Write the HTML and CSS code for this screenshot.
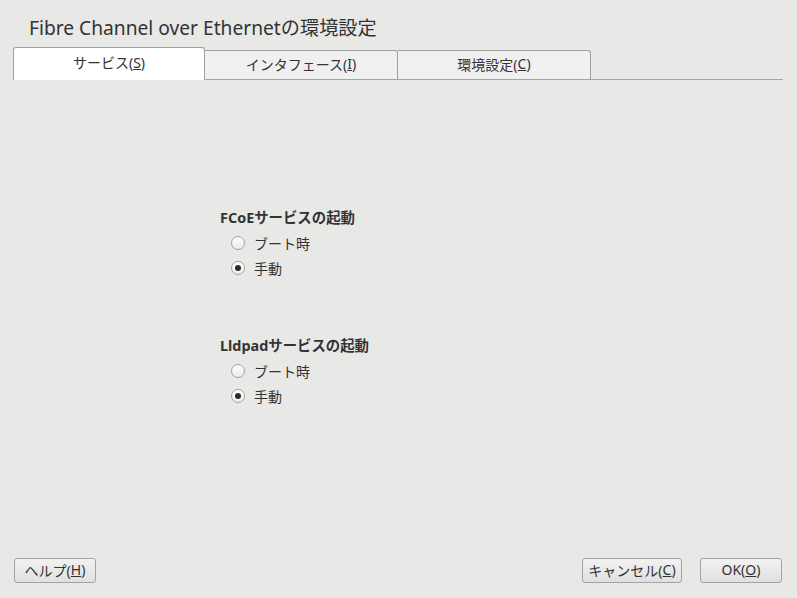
FILE: index.html
```html
<!DOCTYPE html>
<html lang="ja">
<head>
<meta charset="utf-8">
<link rel="stylesheet" href="styles.css">
</head>
<body>
<div class="dialog">
  <h1 class="title">Fibre Channel over Ethernetの環境設定</h1>
  <div class="tabs">
    <div class="tab active">サービス(<u>S</u>)</div>
    <div class="tab">インタフェース(<u>I</u>)</div>
    <div class="tab">環境設定(<u>C</u>)</div>
  </div>
  <div class="content">
    <div class="group">
      <div class="group-title">FCoEサービスの起動</div>
      <label class="radio"><span class="dot"></span>ブート時</label>
      <label class="radio"><span class="dot checked"></span>手動</label>
    </div>
    <div class="group">
      <div class="group-title">Lldpadサービスの起動</div>
      <label class="radio"><span class="dot"></span>ブート時</label>
      <label class="radio"><span class="dot checked"></span>手動</label>
    </div>
  </div>
  <div class="buttons">
    <button class="btn help">ヘルプ(<u>H</u>)</button>
    <div class="spacer"></div>
    <button class="btn cancel">キャンセル(<u>C</u>)</button>
    <button class="btn ok">OK(<u>O</u>)</button>
  </div>
</div>
</body>
</html>
```

FILE: styles.css
```css
* { box-sizing: border-box; }
html, body {
  margin: 0;
  padding: 0;
  width: 797px;
  height: 598px;
  background: #e8e8e7;
  font-family: "Noto Sans", "Noto Sans CJK JP", sans-serif;
  color: #2e2e2e;
  overflow: hidden;
}
.dialog {
  display: flex;
  flex-direction: column;
  height: 598px;
}
.title {
  margin: 0;
  padding: 14px 0 0 29px;
  height: 47px;
  font-size: 19.2px;
  font-weight: normal;
  line-height: 27px;
  color: #333;
}
.tabs {
  display: flex;
  align-items: flex-end;
  margin: 0 14px 0 13px;
  height: 33px;
  border-bottom: 1px solid #a5a5a5;
}
.tab {
  width: 193px;
  height: 29px;
  background: #f0f0f0;
  border: 1px solid #a0a0a0;
  border-bottom: none;
  border-left: none;
  border-radius: 0 3px 0 0;
  display: flex;
  align-items: center;
  justify-content: center;
  font-size: 14px;
  color: #333;
  padding-bottom: 3px;
}
.tab.active {
  width: 192px;
  height: 33px;
  background: #ffffff;
  border-left: 1px solid #a0a0a0;
  border-radius: 3px 3px 0 0;
  margin-bottom: -1px;
  padding-bottom: 4px;
}
u { text-decoration: underline; text-underline-offset: 1px; }
.content {
  flex: 1;
  padding: 128px 0 0 220px;
}
.group {
  display: flex;
  flex-direction: column;
  margin-bottom: 56px;
}
.group-title {
  font-weight: bold;
  font-size: 14.4px;
  line-height: 20px;
  height: 20px;
  color: #333;
  margin-bottom: 2px;
}
.radio {
  display: flex;
  align-items: center;
  height: 25px;
  padding-left: 10px;
  font-size: 14px;
  color: #333;
}
.dot {
  width: 14px;
  height: 14px;
  border-radius: 50%;
  border: 1px solid #a3a3a3;
  background: linear-gradient(#ffffff, #ececec);
  margin-right: 9px;
  margin-left: 1px;
  display: flex;
  align-items: center;
  justify-content: center;
}
.dot.checked::after {
  content: "";
  width: 6px;
  height: 6px;
  border-radius: 50%;
  background: #2a2a2a;
}
.buttons {
  display: flex;
  align-items: center;
  padding: 0 15px 15px 14px;
  gap: 18px;
}
.spacer { flex: 1; }
.btn {
  font-family: inherit;
  font-size: 14px;
  color: #333;
  height: 25px;
  border: 1px solid #a3a3a3;
  border-radius: 3px;
  background: linear-gradient(#f2f2f2, #e0e0e0);
  padding: 0 0 2px;
  display: flex;
  align-items: center;
  justify-content: center;
}
.help { width: 82px; }
.cancel { width: 100px; }
.ok { width: 82px; }
```
